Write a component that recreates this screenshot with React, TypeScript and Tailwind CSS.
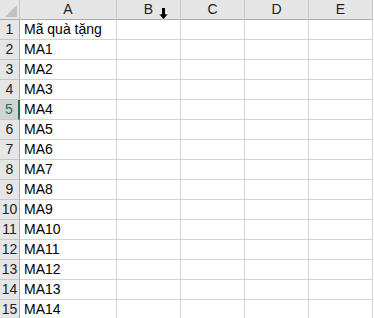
const cols = ['A', 'B', 'C', 'D', 'E'];
const rows = ['Mã quà tặng', ...Array.from({ length: 14 }, (_, i) => `MA${i + 1}`)];

export default function App() {
  return (
    <div
      className="w-[374px] h-[318px] overflow-hidden bg-white text-black"
      style={{ fontFamily: '"Liberation Sans", Arial, sans-serif' }}
    >
      <div className="grid grid-cols-[20px_97px_64px_64px_64px_64px]">
        {/* corner */}
        <div className="relative h-[20px] bg-[#e6e6e6] border-r border-b border-r-[#c6c6c6] border-b-[#ababab]">
          <div className="absolute right-[2px] bottom-[2px] w-0 h-0 border-l-[12px] border-l-transparent border-b-[12px] border-b-[#c0c0c0]" />
        </div>
        {cols.map((c) => (
          <div
            key={c}
            className="relative h-[20px] bg-[#e6e6e6] border-r border-b border-r-[#c6c6c6] border-b-[#ababab] flex items-center justify-center text-[14px] text-[#222]"
          >
            {c}
            {c === 'B' && (
              <svg className="absolute left-[41px] top-[7px]" width="11" height="13" viewBox="0 0 11 13">
                <path d="M3.5 0.5h4v6.5h3l-5 5.5-5-5.5h3z" fill="#000" stroke="#fff" strokeWidth="0.8" />
              </svg>
            )}
          </div>
        ))}

        {rows.map((text, i) => {
          const selected = i === 4;
          return (
            <div key={i} className="contents">
              <div
                className={`h-[20px] border-b flex items-center justify-center text-[14px] ${
                  selected
                    ? 'bg-[#d2d2d2] text-[#217346] border-r-2 border-r-[#217346] border-b-[#c6c6c6]'
                    : 'bg-[#e6e6e6] text-[#222] border-r border-r-[#ababab] border-b-[#c6c6c6]'
                }`}
              >
                {i + 1}
              </div>
              <div className="h-[20px] border-r border-b border-[#d4d4d4] pl-[4px] flex items-end pb-[1px] text-[14px] leading-[17px] whitespace-nowrap">
                {text}
              </div>
              {cols.slice(1).map((c) => (
                <div key={c} className="h-[20px] border-r border-b border-[#d4d4d4]" />
              ))}
            </div>
          );
        })}
      </div>
    </div>
  );
}
